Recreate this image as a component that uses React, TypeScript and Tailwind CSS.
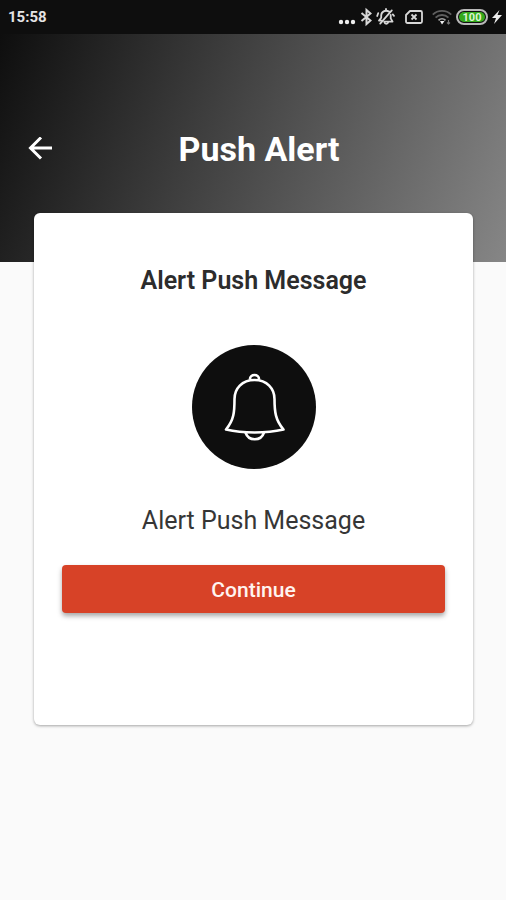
const roboto = "font-['Roboto','Liberation_Sans',sans-serif]";

function StatusIcons() {
  return (
    <div className="flex items-center text-[#d8d8d8]">
      <svg className="mr-1 h-5 w-[18px]" viewBox="0 0 18 20" fill="#eeeeee" aria-hidden="true">
        <circle cx="3" cy="15" r="2.2" />
        <circle cx="9" cy="15" r="2.2" />
        <circle cx="15" cy="15" r="2.2" />
      </svg>
      <svg className="mr-1 h-5 w-3" viewBox="0 0 12 20" fill="none" stroke="currentColor" strokeWidth="2" aria-hidden="true">
        <path d="M1.5 6 10.5 13.500 6.500 17V3l4 3.500L1.500 14" />
      </svg>
      <svg className="mr-2 h-5 w-5" viewBox="0 0 20 20" fill="none" stroke="currentColor" strokeWidth="1.8" strokeLinecap="round" strokeLinejoin="round" aria-hidden="true">
        <path d="M13.2 4.6C9 2.4 5.2 4.8 5.2 8.6v2.2L3 13.6h2.6M8.4 14.6h8.2l-1.9-3.2V7.8" />
        <path d="M8.4 15.2c.4 2.2 3.4 2.2 3.8 0M15.8 3.4 4.2 16.6M2.2 6.2 1.2 9M16.8 7.4l1.2 1.4M10 3V2" />
      </svg>
      <svg className="mr-2 h-5 w-5" viewBox="0 0 20 20" fill="none" stroke="currentColor" strokeWidth="1.8" strokeLinejoin="round" aria-hidden="true">
        <path d="M6 4h10.5c1 0 1.5.5 1.5 1.5v9c0 1-.5 1.5-1.5 1.5h-13C2.5 16 2 15.5 2 14.5V8z" />
        <path d="m7.5 7.5 5 5m0-5-5 5" />
      </svg>
      <svg className="mr-1 h-5 w-5" viewBox="0 0 20 20" fill="none" stroke="#5f5f5f" strokeWidth="1.8" aria-hidden="true">
        <path d="M.8 7.6c5-5 13.4-5 18.4 0M3.6 10.6c3.5-3.5 9.3-3.5 12.8 0" />
        <path d="M6.5 13.4c2-2 5-2 7 0" stroke="#a0a0a0" />
        <path d="M8 14h4.500L10 17.500z" fill="#eeeeee" stroke="none" />
        <path d="M16.5 13v4m-1.5-1.5 1.5 1.5 1.5-1.5" stroke="#777777" strokeWidth="1.2" />
      </svg>
      <div className="mr-1 flex h-4 w-8 items-center rounded-full border-2 border-[#b9b9b9] p-px">
        <span className="flex h-full w-full items-center justify-center rounded-full bg-[#35a91c] text-[11px] leading-none font-bold text-[#dcf5d4]">
          100
        </span>
      </div>
      <svg className="h-5 w-2.5" viewBox="0 0 10 20" fill="#eeeeee" aria-hidden="true">
        <path d="M7.5 3 0 11h4l-2 6 8-9H5.5z" />
      </svg>
    </div>
  );
}

function BellBadge() {
  return (
    <div className="mt-12 flex size-[124px] items-center justify-center rounded-full bg-[#0e0e0e]">
      <svg className="size-[72px]" viewBox="0 0 72 72" fill="none" stroke="#ffffff" strokeWidth="2.6" strokeLinejoin="round" aria-hidden="true">
        <path d="M32 8.500C31.500 2.500 41.500 2.500 41 8.500" />
        <path d="M36.500 9C24 9 16.500 17.500 16.500 28c0 13-.5 21-8.500 30.500C25 62.500 48 62.500 65.500 58.500 57.500 49 56.500 41 56.500 28c0-10.500-7.500-19-20-19z" />
        <path d="M27.500 61.500c3 9 15.500 9 18.500 0" />
      </svg>
    </div>
  );
}

export default function App() {
  return (
    <div className={`min-h-screen bg-[#fafafa] ${roboto}`}>
      <div className="flex h-[34px] items-center justify-between bg-[#0e0e0e] pr-1 pl-2">
        <time className="text-[15px] leading-5 font-bold text-[#e4e4e4]">15:58</time>
        <StatusIcons />
      </div>

      <header className="h-[228px] bg-[linear-gradient(112deg,#0e0e0e_0%,#868686_100%)] pt-[91px]">
        <div className="flex h-12 items-center px-7">
          <button type="button" aria-label="Back" className="flex h-12 w-6 items-center">
            <svg className="size-6" viewBox="0 0 24 24" fill="none" stroke="#ffffff" strokeWidth="3" aria-hidden="true">
              <path d="M24 11H3M13 .5 2.5 11 13 21.5" />
            </svg>
          </button>
          <h1 className="flex-1 pr-3 text-center text-[34px] leading-10 font-bold text-white">Push Alert</h1>
        </div>
      </header>

      <main className="-mt-[49px] pr-[33px] pl-[34px]">
        <section className="flex min-h-[512px] flex-col items-center rounded-md bg-white px-7 pt-[52px] shadow-[0_1px_3px_rgba(0,0,0,0.35)]">
          <h2 className="text-[25px] leading-8 font-semibold text-[#2c2c2c]">Alert Push Message</h2>
          <BellBadge />
          <p className="mt-9 text-[25px] leading-8 text-[#363636]">Alert Push Message</p>
          <button
            type="button"
            className="mt-7 flex h-12 w-full items-center justify-center rounded-[4px] bg-[#d74227] pt-0.5 text-[21px] leading-7 font-medium text-[#fff4f0] shadow-[0_3px_5px_rgba(0,0,0,0.35)]"
          >
            Continue
          </button>
        </section>
      </main>
    </div>
  );
}
